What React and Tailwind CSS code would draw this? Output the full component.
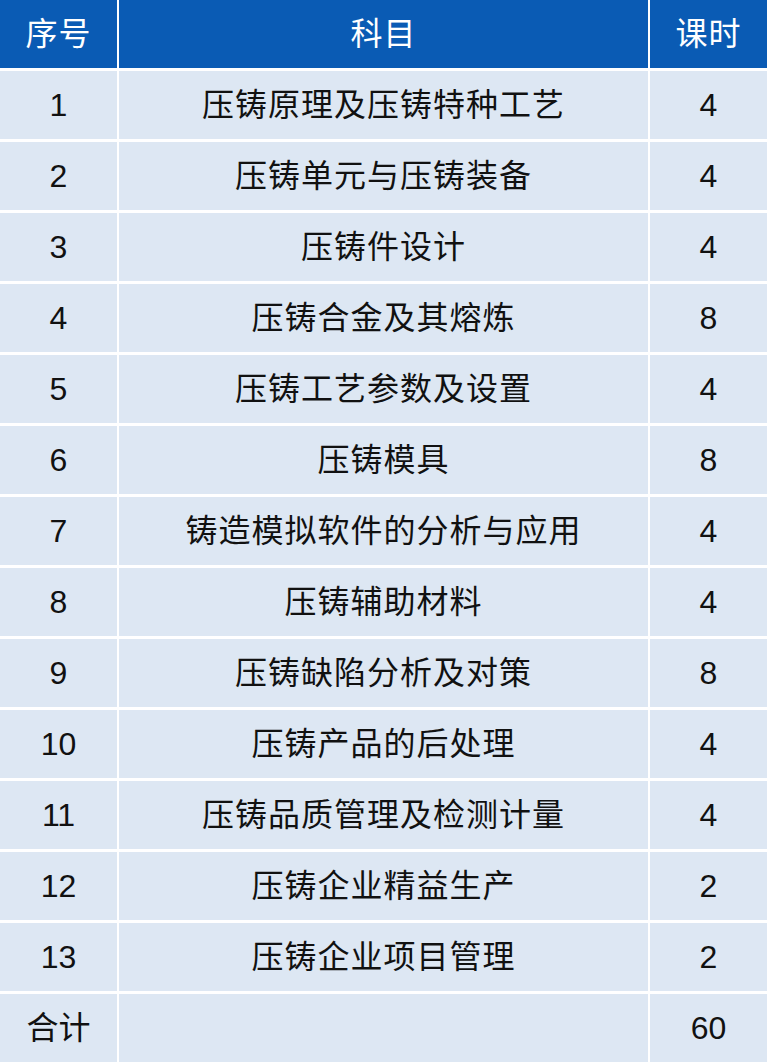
import React from "react";

const rows = [
  ["1", "压铸原理及压铸特种工艺", "4"],
  ["2", "压铸单元与压铸装备", "4"],
  ["3", "压铸件设计", "4"],
  ["4", "压铸合金及其熔炼", "8"],
  ["5", "压铸工艺参数及设置", "4"],
  ["6", "压铸模具", "8"],
  ["7", "铸造模拟软件的分析与应用", "4"],
  ["8", "压铸辅助材料", "4"],
  ["9", "压铸缺陷分析及对策", "8"],
  ["10", "压铸产品的后处理", "4"],
  ["11", "压铸品质管理及检测计量", "4"],
  ["12", "压铸企业精益生产", "2"],
  ["13", "压铸企业项目管理", "2"],
  ["合计", "", "60"],
];

const font = { fontFamily: '"Liberation Sans", "Noto Sans CJK SC", sans-serif' };

export default function App() {
  return (
    <div
      className="w-[767px] h-[1062px] bg-white grid grid-cols-[117px_529px_1fr] grid-rows-[repeat(15,minmax(0,1fr))] gap-x-[2px] gap-y-[2.5px] text-[32px] leading-none"
      style={font}
    >
      <div className="bg-[#0a5bb4] text-white flex items-center justify-center tracking-[1px]">序号</div>
      <div className="bg-[#0a5bb4] text-white flex items-center justify-center tracking-[1px]">科目</div>
      <div className="bg-[#0a5bb4] text-white flex items-center justify-center tracking-[1px]">课时</div>
      {rows.map(([a, b, c], i) => (
        <React.Fragment key={i}>
          <div className="bg-[#dde7f3] text-[#111] flex items-center justify-center">{a}</div>
          <div className="bg-[#dde7f3] text-[#111] flex items-center justify-center tracking-[1px]">{b}</div>
          <div className="bg-[#dde7f3] text-[#111] flex items-center justify-center">{c}</div>
        </React.Fragment>
      ))}
    </div>
  );
}
